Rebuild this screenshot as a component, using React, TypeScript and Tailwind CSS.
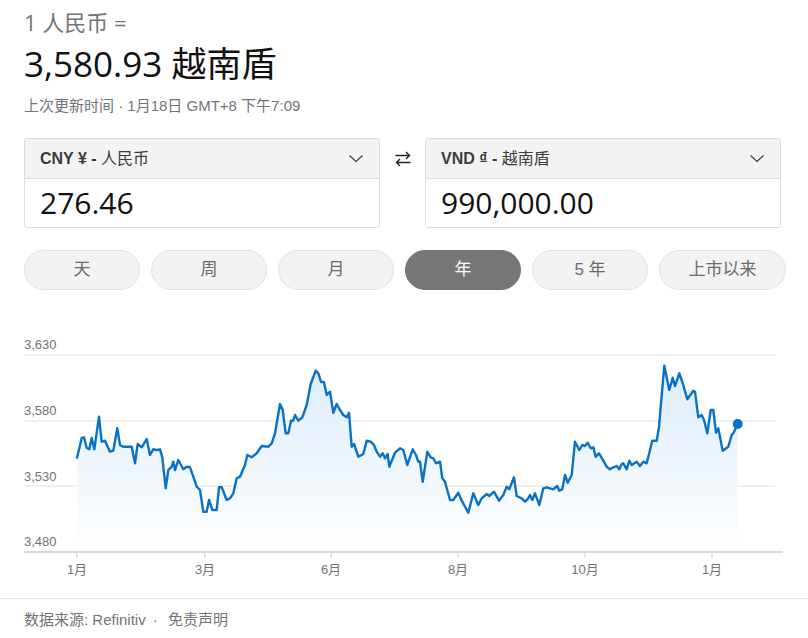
import React from 'react';

// 汇率卡片：人民币 → 越南盾

const sans = "font-['Liberation_Sans','Noto_Sans_CJK_SC',sans-serif]";
const display = "font-['Open_Sans','Noto_Sans_CJK_SC',sans-serif]";

const ranges = ['天', '周', '月', '年', '5 年', '上市以来'];
const activeRange = '年';

// 折线点（页面坐标，y 以图表顶部 330 为基准换算）
const RAW: [number, number][] = [
  [77, 457.7], [81.7, 438], [84, 437.3], [86.7, 448], [89.3, 449.3], [91.7, 438], [94.3, 449.3],
  [99, 416.7], [101.7, 441.7], [105, 440.7], [110, 451.7], [113.3, 450.7], [117.3, 428.3],
  [120, 445], [123.3, 446.7], [131.7, 446.7], [135, 463.3], [137.7, 444], [141.7, 447.3],
  [146.7, 439], [150, 455], [153.3, 449.3], [156.7, 450], [160, 449.3], [162.3, 457.3],
  [165.7, 488.3], [168.3, 470], [171.7, 466.7], [173.3, 461.7], [175, 470], [178.3, 460],
  [183.3, 469.3], [186.7, 466.7], [190, 467.3], [193.3, 476.7], [196.7, 486.7], [200, 490],
  [203.3, 511.7], [206.7, 511.7], [209, 500], [212.3, 510], [216.7, 510], [219, 487.3],
  [221.7, 487.3], [226.7, 500], [230, 498.3], [233.3, 493.3], [236.7, 478.3], [240, 476.7],
  [245, 465], [247.3, 455], [251.7, 457.3], [256.7, 453.3], [261.7, 446], [268.3, 446.7],
  [271.7, 443.3], [275, 433.3], [280, 404], [282.7, 410], [285.7, 433.3], [288.3, 433.3],
  [291, 420.7], [293.3, 420.7], [295, 415], [298.3, 420.7], [302.3, 417.3], [306.7, 405],
  [310.7, 384], [315.7, 370.7], [318.3, 373.3], [321, 381.7], [324, 382.3], [326.7, 395],
  [330, 391.7], [333.3, 412.7], [336.7, 404], [340, 410], [343.3, 415], [346.7, 417.3],
  [349, 412.7], [351.7, 446.7], [354, 444], [358.3, 456.7], [363.3, 454], [366.7, 440.7],
  [370.7, 441.7], [374, 445], [376.7, 451.7], [380, 456.7], [382.7, 453.3], [385, 458.3],
  [387.7, 454], [389.3, 466.7], [395, 452.7], [400, 448.3], [403.3, 450], [407.3, 465],
  [412.7, 449.3], [416, 455], [418.3, 461.7], [420, 461.7], [422.7, 481.7], [427.3, 451.7],
  [430.7, 457.3], [433.3, 458.3], [436, 463.3], [440, 461.7], [442.3, 478.3], [445, 481.7],
  [450, 500], [453.3, 500], [458.3, 492.7], [461.7, 500.7], [465, 506.7], [468.3, 512.7],
  [473.3, 493.3], [478.3, 505], [481.7, 498.3], [486.7, 494], [489.3, 496], [494, 491.7],
  [499, 500.7], [503.3, 495], [506.7, 486.7], [509.3, 489.3], [514, 477.3], [516.7, 496],
  [521.7, 498.3], [525, 501.7], [528.3, 498.3], [530, 495], [532.3, 500], [535, 493.3],
  [539.3, 505], [543.3, 488.3], [546.7, 487.3], [553.3, 489.3], [557.3, 486], [559.3, 490.7],
  [562.3, 489.3], [565, 475], [567.7, 482.7], [571.7, 475], [575, 441.7], [579.3, 450],
  [582.3, 445], [585, 446], [587.7, 442.7], [590.7, 448.3], [593.3, 447.3], [595.7, 456.7],
  [599, 453.3], [603.3, 460.7], [606.7, 466.7], [610, 469.3], [613.3, 467.3], [616.7, 466],
  [619.3, 469.3], [621.7, 464], [623.3, 463.3], [626.7, 469.3], [629.3, 460.7], [631.7, 465],
  [636.7, 461.7], [640, 466], [643.3, 461.7], [646.7, 463.3], [650, 450], [652.3, 440.7],
  [656.7, 440.7], [659, 426.7], [664.3, 365.7], [669.3, 390], [672.7, 377.7], [675, 386],
  [679.3, 373.3], [683.3, 385], [687.3, 399.3], [693.3, 390.7], [695, 391.7], [698.3, 417.3],
  [701.7, 415], [704, 420], [707.3, 433.3], [710.7, 410], [713.3, 410], [716, 432.7],
  [718.3, 428.3], [722.7, 450.7], [728.3, 446.7], [731.7, 435], [733.3, 433.3], [737.7, 424],
];

const TOP = 330;
const BASE = 222;
const pts = RAW.map(([x, y]) => [x, +(y - TOP).toFixed(1)]);
const linePath = pts.map(([x, y], i) => `${i ? 'L' : 'M'}${x} ${y}`).join(' ');
const last = pts[pts.length - 1];
const areaPath = `${linePath} L${last[0]} ${BASE} L${pts[0][0]} ${BASE} Z`;

const yLabels = [
  { label: '3,630', line: 25, text: 18.5 },
  { label: '3,580', line: 91, text: 84.5 },
  { label: '3,530', line: 156, text: 150.5 },
];
const xTicks = [
  { label: '1月', x: 77 },
  { label: '3月', x: 205 },
  { label: '6月', x: 331 },
  { label: '8月', x: 458 },
  { label: '10月', x: 585 },
  { label: '1月', x: 712 },
];

const Chevron: React.FC = () => (
  <svg width="16" height="9" viewBox="0 0 16 9" fill="none">
    <path d="M1.5 1.5l6.5 6 6.5-6" stroke="#3c3c3c" strokeWidth="1.2" />
  </svg>
);

const SwapIcon: React.FC = () => (
  <svg width="18" height="18" viewBox="0 0 18 18" fill="none" stroke="#222" strokeWidth="1.4">
    <path d="M1.5 5.5h14M12 2l3.5 3.5L12 9" />
    <path d="M16.5 12.5h-14M6 9l-3.5 3.5L6 16" />
  </svg>
);

const CurrencyBox: React.FC<{ code: string; symbol: string; name: string; value: string }> = ({
  code,
  symbol,
  name,
  value,
}) => (
  <div className="w-[356px] border border-[#dcdcdc] rounded-[3px] overflow-hidden">
    <div className="h-[40px] bg-[#f3f3f3] border-b border-[#dcdcdc] flex items-center justify-between pl-[15px] pr-[15px]">
      <span className={`${sans} text-[16px] text-[#3c3c3c]`}>
        <span className="font-bold">
          {code} {symbol} -
        </span>{' '}
        {name}
      </span>
      <Chevron />
    </div>
    <div className="h-[48px] bg-white flex items-center pl-[15px]">
      <span className={`${display} text-[30px] leading-none text-[#111]`}>{value}</span>
    </div>
  </div>
);

const App: React.FC = () => {
  return (
    <div className={`w-[808px] h-[638px] bg-white overflow-hidden ${sans}`}>
      <div className="px-6">
        <div className={`${display} pt-[10px] text-[22px] leading-6 text-[#70757a]`}>
          1 人民币 =
        </div>
        <div className={`${display} mt-[8px] text-[35px] leading-[44px] text-[#111]`}>3,580.93 越南盾</div>
        <div className="mt-[10px] text-[15px] leading-[20px] text-[#70757a]">
          上次更新时间 · 1月18日 GMT+8 下午7:09
        </div>

        <div className="mt-[22px] flex items-start">
          <CurrencyBox code="CNY" symbol="¥" name="人民币" value="276.46" />
          <div className="w-[45px] h-[41px] flex items-center justify-center pt-[1px]">
            <SwapIcon />
          </div>
          <CurrencyBox code="VND" symbol="₫" name="越南盾" value="990,000.00" />
        </div>

        <div className="mt-[22px] flex gap-[11px] w-[762px]">
          {ranges.map((r) => {
            const on = r === activeRange;
            return (
              <button
                key={r}
                className={`h-[40px] rounded-full border text-[17px] ${
                  r === '上市以来' ? 'flex-1' : 'w-[116px]'
                } ${
                  on
                    ? 'bg-[#767676] border-[#767676] text-white'
                    : 'bg-[#f3f3f3] border-[#e2e2e2] text-[#6b6b6b]'
                }`}
              >
                {r}
              </button>
            );
          })}
        </div>
      </div>

      {/* 年度走势图 */}
      <svg width="808" height="268" className="mt-[40px] block">
        <defs>
          <linearGradient id="area" x1="0" y1="0" x2="0" y2="1">
            <stop offset="0%" stopColor="#d8e9fb" stopOpacity="0.85" />
            <stop offset="100%" stopColor="#ffffff" stopOpacity="0.9" />
          </linearGradient>
        </defs>
        {yLabels.map((g) => (
          <g key={g.label}>
            <line x1="24" x2="775" y1={g.line} y2={g.line} stroke="#ebebeb" strokeWidth="1.5" />
            <text x="24" y={g.text} fontSize="13" fill="#70757a" fontFamily="Liberation Sans, sans-serif">
              {g.label}
            </text>
          </g>
        ))}
        <text x="24" y="215.5" fontSize="13" fill="#70757a" fontFamily="Liberation Sans, sans-serif">
          3,480
        </text>
        <path d={areaPath} fill="url(#area)" />
        <line x1="24" x2="783" y1={BASE} y2={BASE} stroke="#dadada" strokeWidth="2" />
        {xTicks.map((t, i) => (
          <g key={i}>
            <line x1={t.x} x2={t.x} y1={BASE} y2={BASE + 6} stroke="#cfcfcf" strokeWidth="1" />
            <text
              x={t.x}
              y="243.5"
              textAnchor="middle"
              fontSize="13"
              fill="#70757a"
              fontFamily="Liberation Sans, Noto Sans CJK SC, sans-serif"
            >
              {t.label}
            </text>
          </g>
        ))}
        <path d={linePath} fill="none" stroke="#0a72c6" strokeWidth="2.4" strokeLinejoin="round" strokeLinecap="round" />
        <circle cx={last[0]} cy={last[1]} r="5" fill="#0a72c6" />
      </svg>

      <div className="border-t border-[#e6e6e6] pt-[11px] px-6 text-[15px] leading-[20px] text-[#70757a]">
        数据来源: Refinitiv <span className="ml-[3px] mr-[6px]">·</span> 免责声明
      </div>
    </div>
  );
};

export default App;
